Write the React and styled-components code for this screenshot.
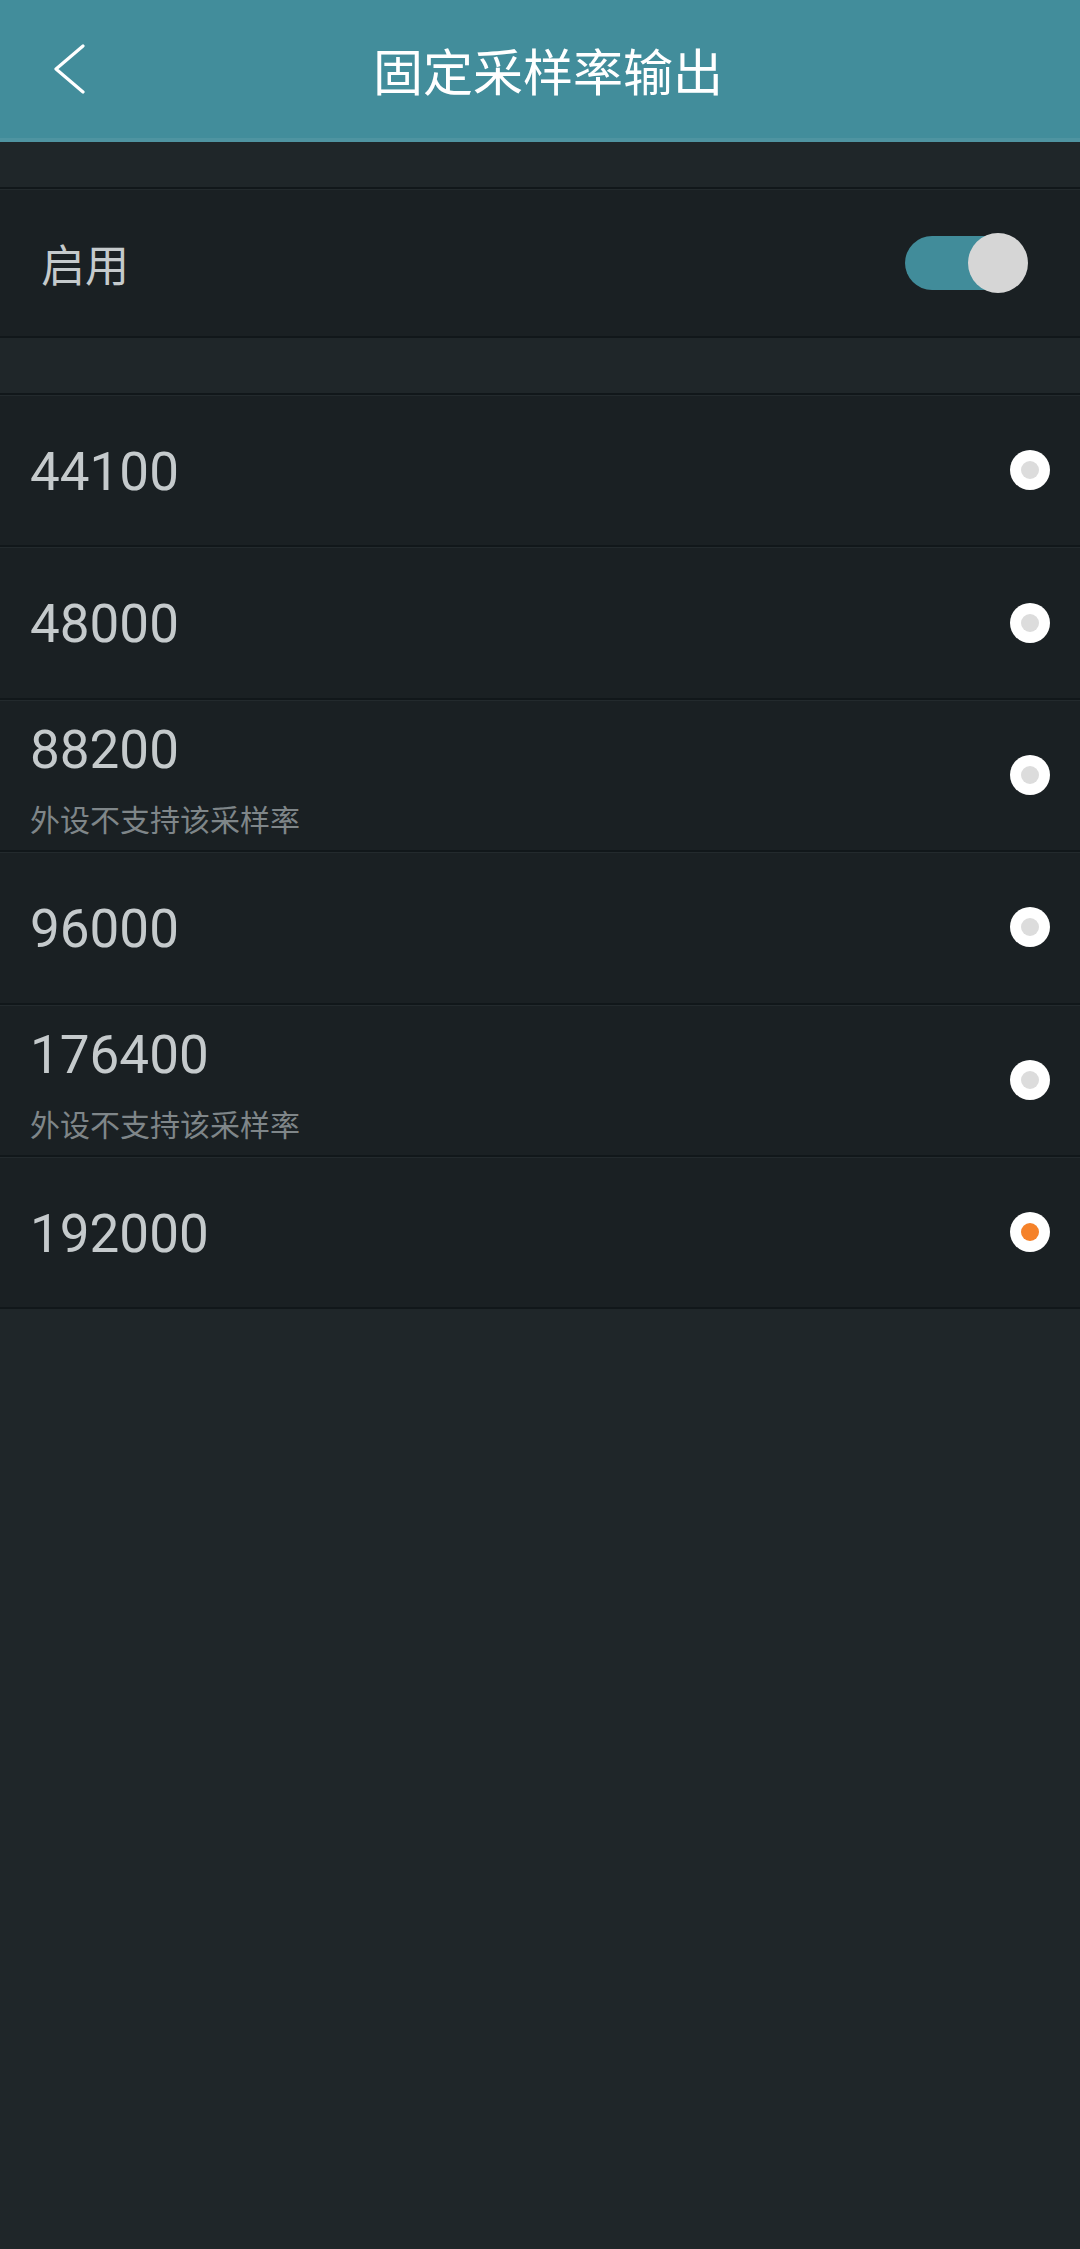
import React, { useState } from 'react';
import styled, { createGlobalStyle } from 'styled-components';

const GlobalStyle = createGlobalStyle`
  html, body {
    margin: 0;
    padding: 0;
    background-color: #1f2629;
  }
  body {
    font-family: Roboto, "Noto Sans CJK SC", sans-serif;
  }
`;

const Page = styled.div`
  min-height: 2249px;
  background-color: #1f2629;
  display: flex;
  flex-direction: column;
`;

const Header = styled.header`
  height: 138px;
  background-color: #428d9b;
  border-bottom: 4px solid #4f94a1;
  display: flex;
  align-items: center;
`;

const BackButton = styled.button`
  background: none;
  border: none;
  padding: 0;
  margin-left: 52px;
  width: 36px;
  height: 50px;
  display: flex;
  align-items: center;
  cursor: pointer;
`;

const Title = styled.h1`
  flex: 1;
  margin: 0 0 0 -88px;
  padding-left: 16px;
  text-align: center;
  color: #ffffff;
  font-family: "Noto Sans CJK SC", sans-serif;
  font-weight: 400;
  font-size: 50px;
  line-height: 1;
`;

const Gap = styled.div`
  height: ${({ size }) => size}px;
  background-color: #1f2629;
`;

const Group = styled.section`
  background-color: #1a2023;
  border-top: 2px solid #11171a;
`;

const Row = styled.div`
  height: ${({ tall }) => tall}px;
  display: flex;
  align-items: center;
  justify-content: space-between;
  padding: 0 30px 0 ${({ inset }) => inset}px;
  border-bottom: 2px solid #11171a;
  box-shadow: inset 0 1px 0 #232a2d;
`;

const Label = styled.span`
  color: #c5cacc;
  font-family: "Noto Sans CJK SC", sans-serif;
  font-size: 44px;
  line-height: 1;
`;

const SwitchBox = styled.div`
  position: relative;
  width: 123px;
  height: 60px;
  margin-right: 22px;
  cursor: pointer;
`;

const Track = styled.div`
  position: absolute;
  left: 0;
  top: 3px;
  width: 118px;
  height: 54px;
  border-radius: 27px;
  background-color: ${({ on }) => (on ? '#418c9a' : '#4a5256')};
`;

const Knob = styled.div`
  position: absolute;
  top: 0;
  left: ${({ on }) => (on ? 63 : 0)}px;
  width: 60px;
  height: 60px;
  border-radius: 50%;
  background-color: #d6d6d6;
`;

const RateText = styled.div`
  display: flex;
  flex-direction: column;
  padding-top: ${({ hasNote }) => (hasNote ? 6 : 3)}px;
`;

const Rate = styled.span`
  color: #c5cacc;
  font-family: Roboto, sans-serif;
  font-size: 53px;
  line-height: 60px;
`;

const Note = styled.span`
  color: #7f8689;
  font-family: "Noto Sans CJK SC", sans-serif;
  font-size: 30px;
  line-height: 36px;
  margin-top: 20px;
`;

const Radio = styled.span`
  width: 40px;
  height: 40px;
  border-radius: 50%;
  background-color: #ffffff;
  display: flex;
  align-items: center;
  justify-content: center;
  flex-shrink: 0;

  &::after {
    content: '';
    width: 18px;
    height: 18px;
    border-radius: 50%;
    background-color: ${({ checked }) => (checked ? '#f5822a' : '#dcdcdc')};
  }
`;

const rates = [
  { value: 44100 },
  { value: 48000 },
  { value: 88200, note: '外设不支持该采样率' },
  { value: 96000 },
  { value: 176400, note: '外设不支持该采样率' },
  { value: 192000 },
];

function App() {
  const [enabled, setEnabled] = useState(true);
  const [selected, setSelected] = useState(192000);

  return (
    <Page>
      <GlobalStyle />
      <Header>
        <BackButton aria-label="返回">
          <svg width="36" height="50" viewBox="0 0 36 50">
            <polyline points="31,2 4,25 31,48" fill="none" stroke="#ffffff" strokeWidth="3.2" strokeLinecap="round" strokeLinejoin="round" />
          </svg>
        </BackButton>
        <Title>固定采样率输出</Title>
      </Header>

      <Gap size={45} />
      <Group>
        <Row tall={147} inset={41} onClick={() => setEnabled(!enabled)}>
          <Label>启用</Label>
          <SwitchBox>
            <Track on={enabled} />
            <Knob on={enabled} />
          </SwitchBox>
        </Row>
      </Group>

      <Gap size={55} />
      <Group>
        {rates.map((r) => (
          <Row key={r.value} tall={150.4} inset={30} onClick={() => setSelected(r.value)}>
            <RateText hasNote={!!r.note}>
              <Rate>{r.value}</Rate>
              {r.note && <Note>{r.note}</Note>}
            </RateText>
            <Radio checked={selected === r.value} />
          </Row>
        ))}
      </Group>
    </Page>
  );
}

export default App;
